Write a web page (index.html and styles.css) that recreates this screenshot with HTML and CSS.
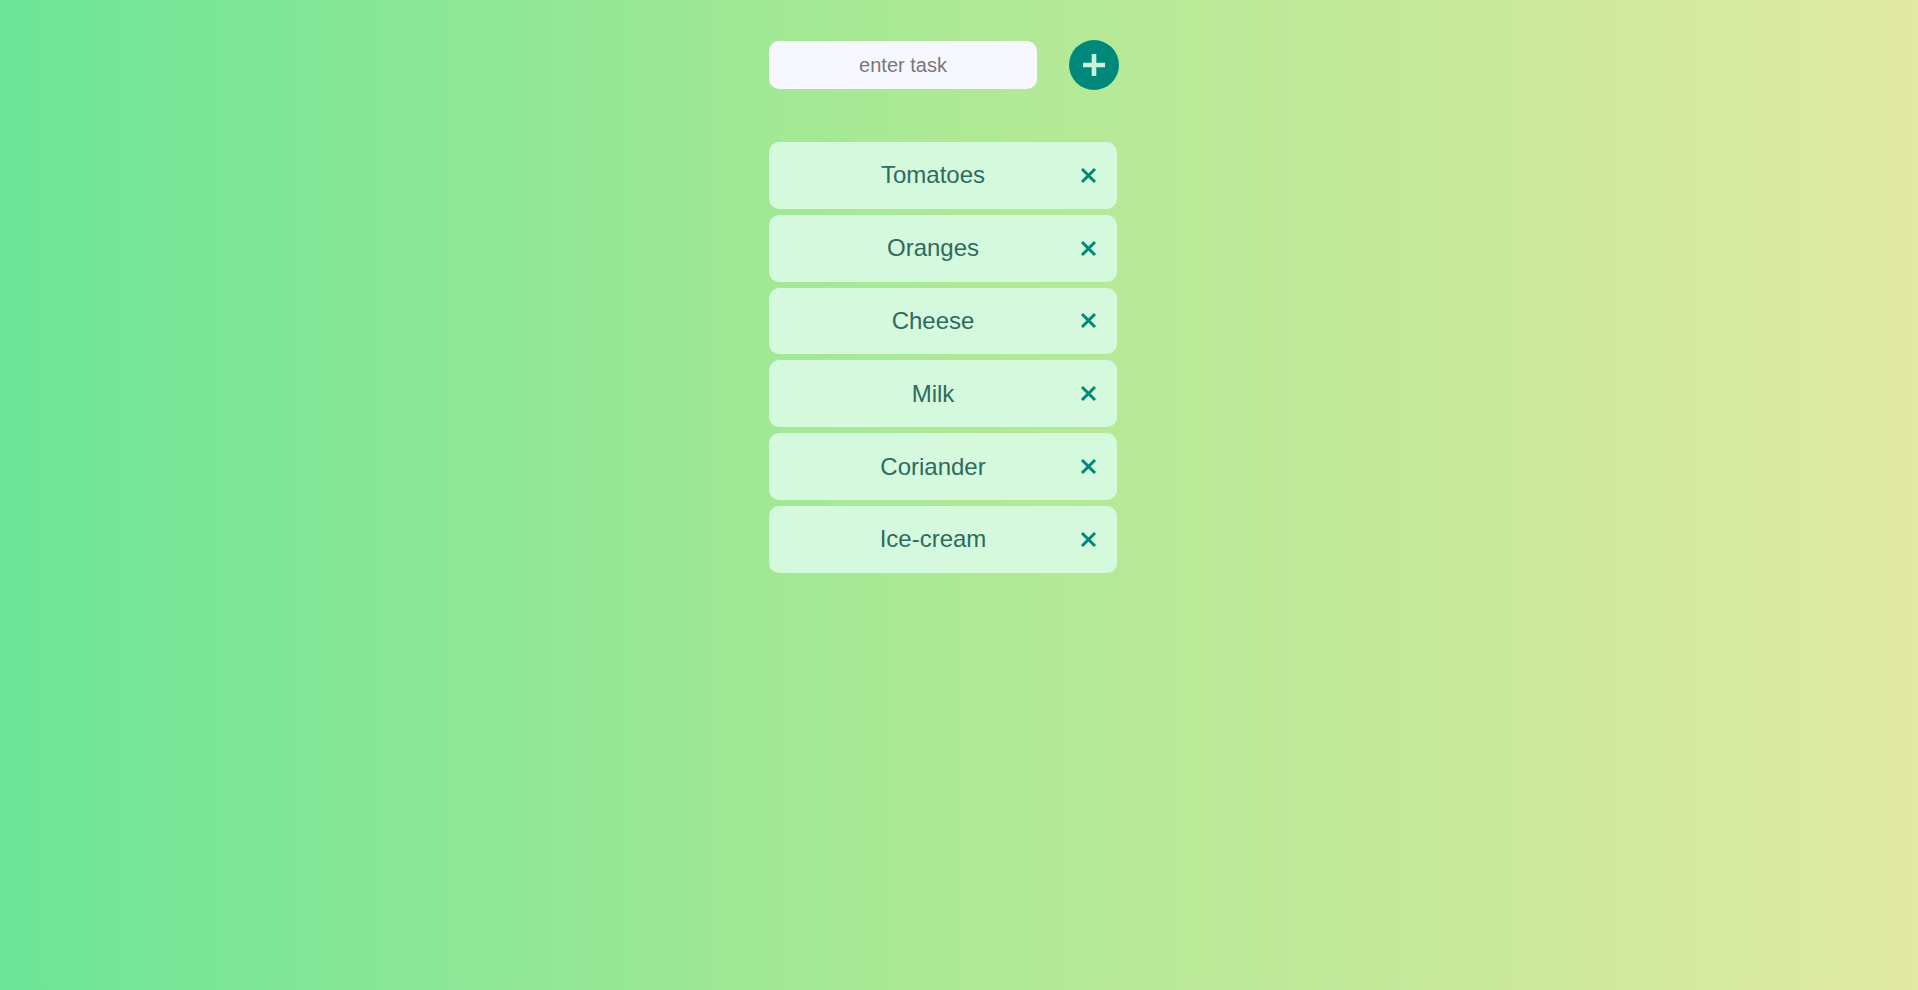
FILE: index.html
```html
<!DOCTYPE html>
<html lang="en">
<head>
<meta charset="utf-8">
<title>Todo</title>
<link rel="stylesheet" href="styles.css">
</head>
<body>
<main class="app">
  <form class="add-form" onsubmit="return false">
    <input class="task-input" type="text" placeholder="enter task" autofocus>
    <button class="add-btn" type="button" aria-label="add">
      <svg width="26" height="26" viewBox="0 0 26 26"><path d="M13 2v22M2 13h22" stroke="#c9f6da" stroke-width="4.6" fill="none"/></svg>
    </button>
  </form>
  <ul class="list">
    <li class="item"><span class="label">Tomatoes</span><button class="del" type="button" aria-label="delete"><svg width="17" height="17" viewBox="0 0 17 17"><path d="M2 2l13 13M15 2L2 15" stroke="#00897b" stroke-width="3" fill="none"/></svg></button></li>
    <li class="item"><span class="label">Oranges</span><button class="del" type="button" aria-label="delete"><svg width="17" height="17" viewBox="0 0 17 17"><path d="M2 2l13 13M15 2L2 15" stroke="#00897b" stroke-width="3" fill="none"/></svg></button></li>
    <li class="item"><span class="label">Cheese</span><button class="del" type="button" aria-label="delete"><svg width="17" height="17" viewBox="0 0 17 17"><path d="M2 2l13 13M15 2L2 15" stroke="#00897b" stroke-width="3" fill="none"/></svg></button></li>
    <li class="item"><span class="label">Milk</span><button class="del" type="button" aria-label="delete"><svg width="17" height="17" viewBox="0 0 17 17"><path d="M2 2l13 13M15 2L2 15" stroke="#00897b" stroke-width="3" fill="none"/></svg></button></li>
    <li class="item"><span class="label">Coriander</span><button class="del" type="button" aria-label="delete"><svg width="17" height="17" viewBox="0 0 17 17"><path d="M2 2l13 13M15 2L2 15" stroke="#00897b" stroke-width="3" fill="none"/></svg></button></li>
    <li class="item"><span class="label">Ice-cream</span><button class="del" type="button" aria-label="delete"><svg width="17" height="17" viewBox="0 0 17 17"><path d="M2 2l13 13M15 2L2 15" stroke="#00897b" stroke-width="3" fill="none"/></svg></button></li>
  </ul>
</main>
</body>
</html>
```
FILE: styles.css
```css
* { box-sizing: border-box; }
html, body { height: 100%; }
body {
  margin: 0;
  font-family: "Liberation Sans", Arial, sans-serif;
  background: linear-gradient(to right, #6de598 0%, #aee995 50%, #e1e9a3 100%);
}
.app {
  width: 380px;
  margin: 0 auto;
  padding-top: 40px;
}
.add-form {
  display: flex;
  align-items: center;
  gap: 32px;
  height: 50px;
}
.task-input {
  width: 268px;
  height: 48px;
  border: none;
  border-radius: 10px;
  background: #f7f8ff;
  font-family: "Liberation Sans", Arial, sans-serif;
  font-size: 20px;
  color: #333;
  text-align: center;
  outline: none;
  caret-color: #000;
  padding: 0 10px;
}
.task-input::placeholder { color: #777; }
.add-btn {
  width: 50px;
  height: 50px;
  border: none;
  border-radius: 50%;
  background: #00897b;
  display: flex;
  align-items: center;
  justify-content: center;
  padding: 0;
  cursor: pointer;
}
.list {
  list-style: none;
  margin: 52px 0 0;
  padding: 0;
  width: 348px;
  display: flex;
  flex-direction: column;
  gap: 6px;
}
.item {
  display: flex;
  align-items: center;
  height: 66.8px;
  padding: 0 20px;
  border-radius: 10px;
  background: #d4f9dd;
}
.label {
  flex: 1;
  text-align: center;
  font-size: 24px;
  color: #2f6b5f;
}
.del {
  width: 17px;
  height: 17px;
  margin-left: 3px;
  border: none;
  background: none;
  padding: 0;
  display: flex;
  cursor: pointer;
}
```
